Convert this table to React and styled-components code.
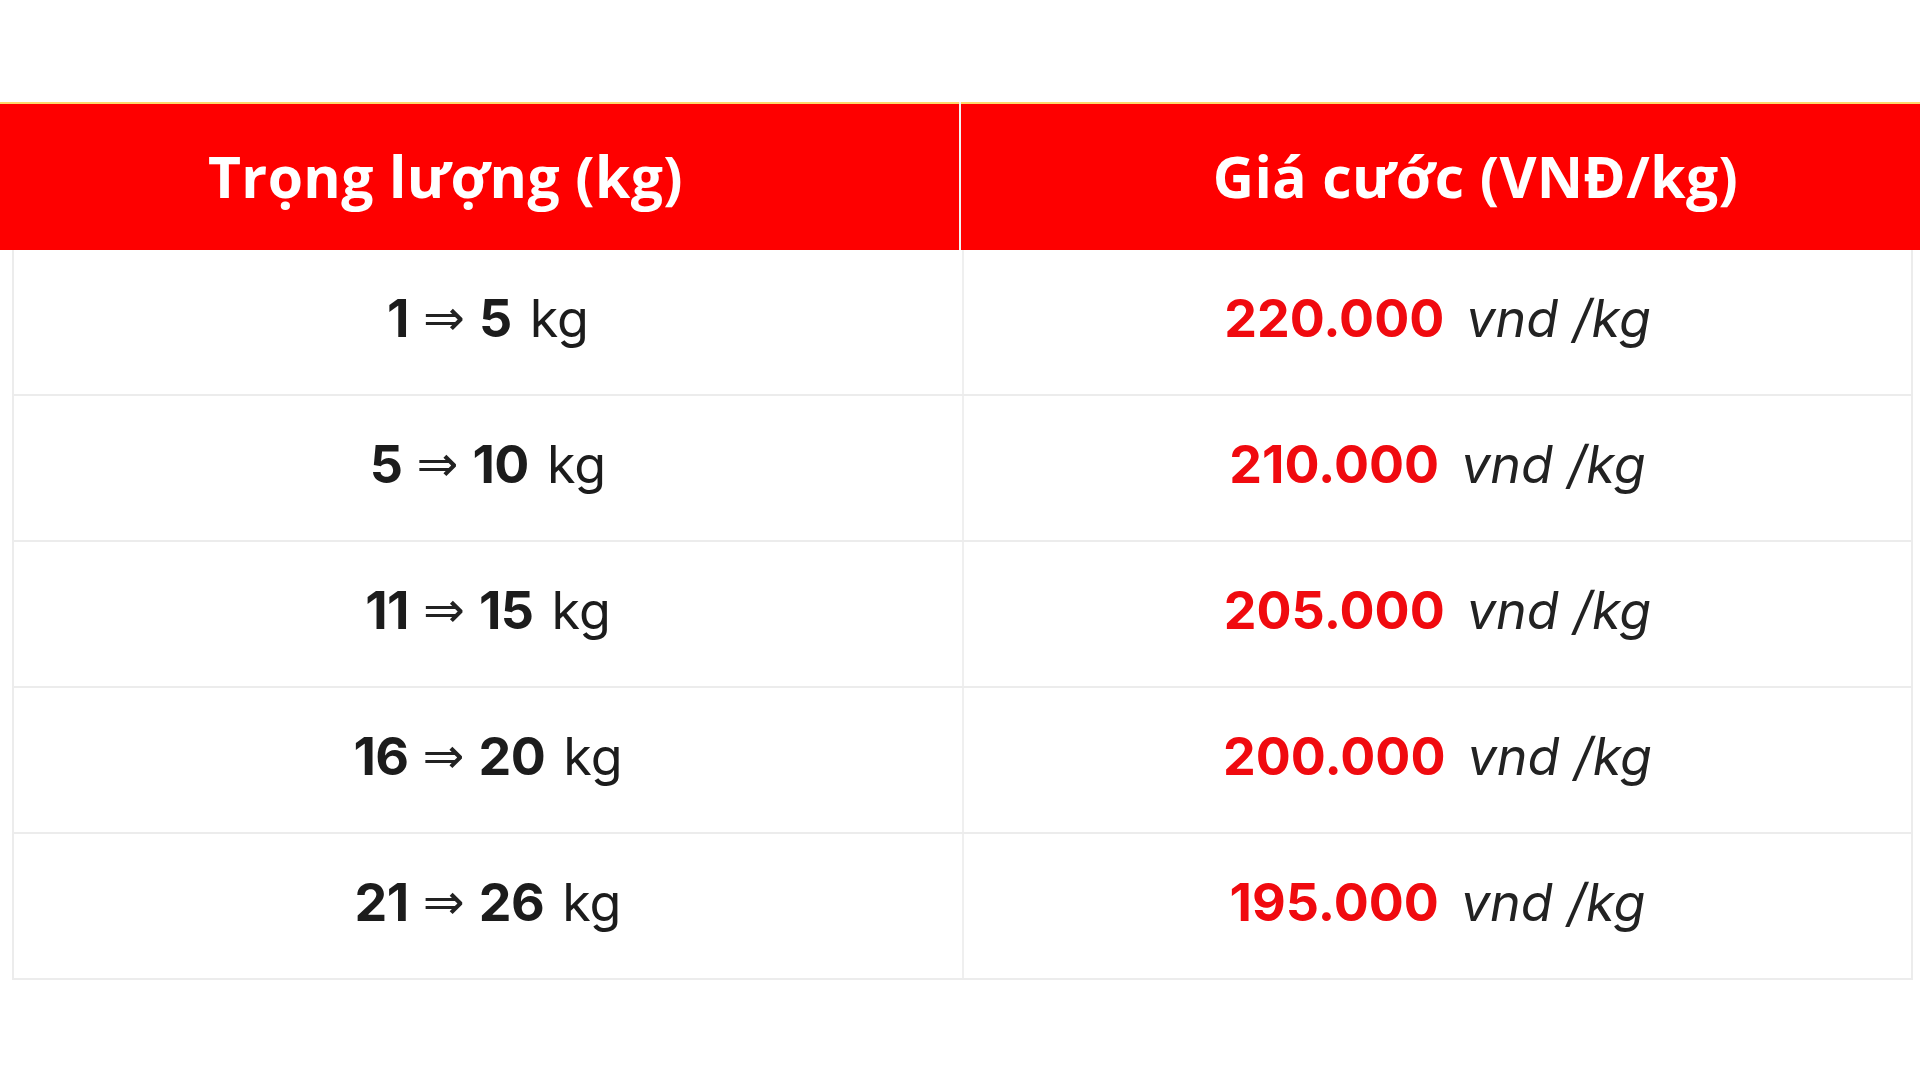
import React from "react";
import styled, { createGlobalStyle } from "styled-components";

const rates = [
    { from: 1, to: 5, price: "220.000" },
    { from: 5, to: 10, price: "210.000" },
    { from: 11, to: 15, price: "205.000" },
    { from: 16, to: 20, price: "200.000" },
    { from: 21, to: 26, price: "195.000" },
];

function App(){
    return (
        <>
            <GlobalStyle />
            <Page>
                <HeaderRow>
                    <HeadCell $shift={-34}>Trọng lượng (kg)</HeadCell>
                    <HeadCell $shift={35} $divider>Giá cước (VNĐ/kg)</HeadCell>
                </HeaderRow>

                <Body>
                    {rates.map(rate => (
                        <Row key={rate.from}>
                            <Cell>
                                <Strong>{rate.from}</Strong>
                                <Arrow>⇒</Arrow>
                                <Strong>{rate.to}</Strong>
                                <Unit>kg</Unit>
                            </Cell>
                            <Cell $divider>
                                <Price>{rate.price}</Price>
                                <PerUnit>vnd /kg</PerUnit>
                            </Cell>
                        </Row>
                    ))}
                </Body>
            </Page>
        </>
    )
}

const GlobalStyle = createGlobalStyle`
    html, body{
        margin: 0;
        padding: 0;
        background: #fff;
    }

    body{
        width: 1920px;
        height: 1080px;
        overflow: hidden;
        font-family: "Inter", "Liberation Sans", sans-serif;
    }
`;

const Page = styled.div`
    padding-top: 102px;
`;

const HeaderRow = styled.div`
    display: grid;
    grid-template-columns: 959px 1fr;
    height: 148px;
    background-color: #fe0000;
    box-shadow: inset 0 2px 0 #ffd76a;
`;

const HeadCell = styled.div`
    display: flex;
    align-items: center;
    justify-content: center;
    padding: ${props => props.$shift < 0 ? `0 ${-props.$shift * 2}px 0 0` : `0 0 0 ${props.$shift * 2}px`};
    border-left: ${props => props.$divider ? "2px solid #f4f4f4" : "none"};
    color: #fff;
    font-family: "Open Sans", "Noto Sans", sans-serif;
    font-weight: 700;
    font-size: 57px;
    letter-spacing: 0.4px;
`;

const Body = styled.div`
    margin: 0 7px 0 12px;
    border-left: 2px solid #ececec;
    border-right: 2px solid #ececec;
`;

const Row = styled.div`
    display: grid;
    grid-template-columns: 948px 1fr;
    height: 144px;
    border-bottom: 2px solid #ececec;
`;

const Cell = styled.div`
    display: flex;
    align-items: center;
    justify-content: center;
    gap: 14px;
    padding-bottom: 8px;
    border-left: ${props => props.$divider ? "2px solid #efefef" : "none"};
    font-size: 52px;
    color: #1c1c1c;
`;

const Strong = styled.span`
    font-weight: 700;
    letter-spacing: -0.5px;
`;

const Arrow = styled.span`
    font-family: "DejaVu Sans", sans-serif;
    font-size: 50px;
    font-weight: 400;
    color: #222;
`;

const Unit = styled.span`
    font-weight: 400;
    margin-left: 4px;
`;

const Price = styled.span`
    font-weight: 700;
    color: #f00a0f;
    margin-right: 8px;
`;

const PerUnit = styled.span`
    font-style: italic;
    font-weight: 400;
    color: #222;
`;

export default App;
